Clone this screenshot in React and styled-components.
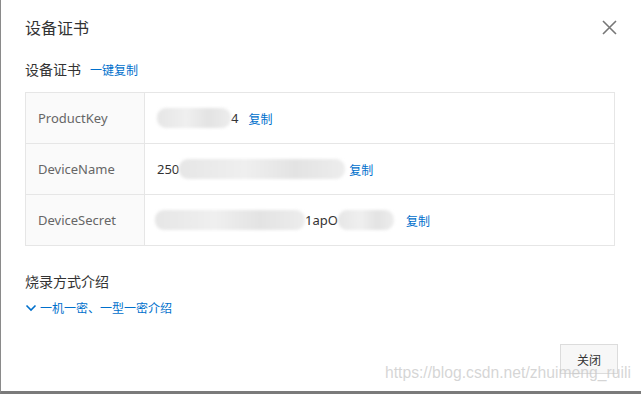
import React from "react";
import styled, { createGlobalStyle } from "styled-components";

const GlobalStyle = createGlobalStyle`
  html, body {
    margin: 0;
    padding: 0;
    background: #ffffff;
  }
  body {
    font-family: "Noto Sans", "Noto Sans CJK SC", sans-serif;
  }
`;

const Frame = styled.div`
  position: relative;
  width: 641px;
  height: 394px;
  box-sizing: border-box;
  border-left: 1px solid #8a8a8a;
  border-bottom: 3px solid #7a7a7a;
  background: #fff;
  overflow: hidden;
  display: flex;
  flex-direction: column;
`;

const Header = styled.div`
  display: flex;
  align-items: center;
  justify-content: space-between;
  padding: 16px 24px 0 24px;
  height: 22px;
`;

const Title = styled.h1`
  margin: 0;
  font-size: 16px;
  font-weight: normal;
  color: #333;
  font-family: "Noto Sans CJK SC", sans-serif;
`;

const CloseButton = styled.button`
  border: none;
  background: none;
  padding: 0;
  width: 16px;
  height: 16px;
  cursor: pointer;
  display: flex;
  align-items: center;
  justify-content: center;
`;

const Body = styled.div`
  flex: 1;
  padding: 0 24px;
  display: flex;
  flex-direction: column;
`;

const SectionTitle = styled.div`
  display: flex;
  align-items: baseline;
  gap: 9px;
  font-size: 14px;
  color: #333;
  font-family: "Noto Sans CJK SC", sans-serif;
  margin-top: ${(p) => p.$top}px;
  height: 20px;
`;

const Link = styled.a`
  color: #0070cc;
  font-size: 12px;
  cursor: pointer;
  text-decoration: none;
  font-family: "Noto Sans CJK SC", sans-serif;
`;

const Table = styled.div`
  margin-top: 13px;
  border: 1px solid #e6e6e6;
  width: 590px;
  box-sizing: border-box;
`;

const Row = styled.div`
  display: grid;
  grid-template-columns: 119px 1fr;
  height: 50px;
  border-top: ${(p) => (p.$first ? "none" : "1px solid #e6e6e6")};
`;

const Label = styled.div`
  background: #fafafa;
  border-right: 1px solid #e6e6e6;
  display: flex;
  align-items: center;
  padding-left: 12px;
  font-size: 13px;
  color: #666;
`;

const Value = styled.div`
  display: flex;
  align-items: center;
  padding-left: 12px;
  font-size: 13px;
  color: #333;
`;

const Blur = styled.span`
  display: inline-block;
  width: ${(p) => p.$w}px;
  height: 20px;
  margin-left: ${(p) => p.$ml || 0}px;
  background: linear-gradient(90deg, #e6e6e6, #efefef 40%, #e3e3e3 70%, #ededed);
  border-radius: 9px;
  filter: blur(1.5px);
`;

const Copy = styled(Link)`
  margin-left: ${(p) => p.$ml}px;
`;

const Toggle = styled(Link)`
  display: flex;
  align-items: center;
  gap: 3px;
  margin-top: 8px;
`;

const Footer = styled.div`
  display: flex;
  justify-content: flex-end;
  padding: 0 23px 17px 0;
`;

const Button = styled.button`
  width: 58px;
  height: 30px;
  border: 1px solid #dcdcdc;
  background: #f7f7f7;
  color: #333;
  font-size: 12px;
  font-family: "Noto Sans CJK SC", sans-serif;
  cursor: pointer;
`;

const Watermark = styled.div`
  position: absolute;
  left: 384px;
  top: 364px;
  font-size: 15.7px;
  color: rgba(200, 200, 200, 0.75);
  font-family: "Liberation Sans", Arial, sans-serif;
  pointer-events: none;
  white-space: nowrap;
`;

const rows = [
  { label: "ProductKey", value: <><Blur $w={74} /><span>4</span></>, ml: 10 },
  { label: "DeviceName", value: <><span>250</span><Blur $w={166} /></>, ml: 4 },
  {
    label: "DeviceSecret",
    value: (
      <>
        <Blur $w={150} $ml={-2} />
        <span>1apO</span>
        <Blur $w={56} />
      </>
    ),
    ml: 12,
  },
];

export default function App() {
  return (
    <>
      <GlobalStyle />
      <Frame>
        <Header>
          <Title>设备证书</Title>
          <CloseButton aria-label="close">
            <svg width="15" height="15" viewBox="0 0 15 15">
              <path d="M1 1L14 14M14 1L1 14" stroke="#777" strokeWidth="1.6" />
            </svg>
          </CloseButton>
        </Header>
        <Body>
          <SectionTitle $top={21}>
            设备证书<Link>一键复制</Link>
          </SectionTitle>
          <Table>
            {rows.map((r, i) => (
              <Row key={r.label} $first={i === 0}>
                <Label>{r.label}</Label>
                <Value>
                  {r.value}
                  <Copy $ml={r.ml}>复制</Copy>
                </Value>
              </Row>
            ))}
          </Table>
          <SectionTitle $top={25}>烧录方式介绍</SectionTitle>
          <Toggle>
            <svg width="12" height="12" viewBox="0 0 12 12">
              <path d="M1.5 3.5L6 8L10.5 3.5" fill="none" stroke="#0070cc" strokeWidth="1.6" />
            </svg>
            一机一密、一型一密介绍
          </Toggle>
        </Body>
        <Footer>
          <Button>关闭</Button>
        </Footer>
        <Watermark>https://blog.csdn.net/zhuimeng_ruili</Watermark>
      </Frame>
    </>
  );
}
